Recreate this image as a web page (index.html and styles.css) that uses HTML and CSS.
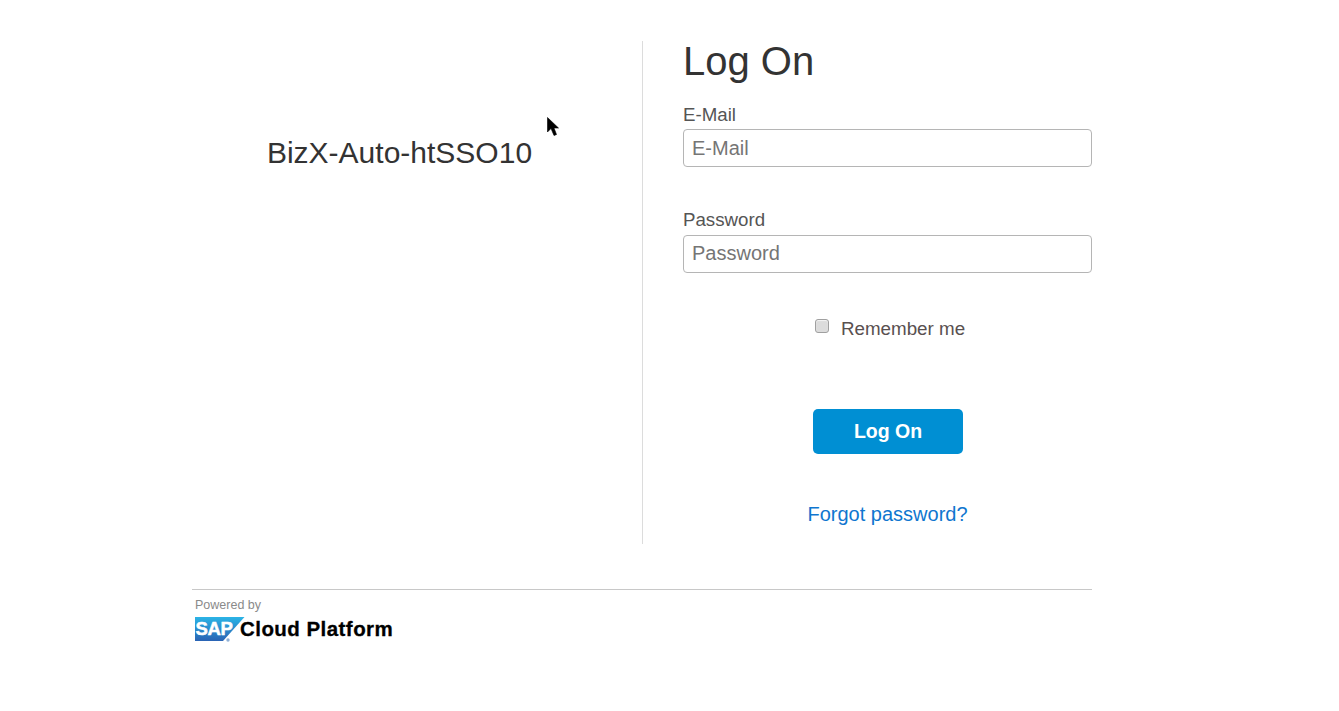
FILE: index.html
```html
<!DOCTYPE html>
<html lang="en">
<head>
<meta charset="utf-8">
<title>Log On</title>
<link rel="stylesheet" href="styles.css">
</head>
<body>
<svg class="cursor" width="12" height="20" viewBox="0 0 12 20"><path d="M0.5 0.5V15L4 11.5L7 18.5L9.5 17.5L7 11H11.5Z" fill="#000" stroke="#000" stroke-width="0.6"/></svg>
<main class="page">
  <div class="columns">
    <section class="brand"><div class="tenant">BizX-Auto-htSSO10</div></section>
    <form class="logon" onsubmit="return false">
      <h1 class="heading">Log On</h1>
      <label class="field-label" for="email">E-Mail</label>
      <input class="field" id="email" type="text" placeholder="E-Mail">
      <label class="field-label field-label-second" for="password">Password</label>
      <input class="field field-password" id="password" type="password" placeholder="Password">
      <label class="remember"><input class="check" type="checkbox"><span>Remember me</span></label>
      <button class="submit" type="submit">Log On</button>
      <a class="forgot" href="#">Forgot password?</a>
    </form>
  </div>
  <footer class="footer">
    <div class="powered">Powered by</div>
    <div class="product">
      <svg class="sap-logo" width="50" height="25" viewBox="0 0 50 25">
        <defs><linearGradient id="sapblue" x1="0" y1="0" x2="0" y2="1"><stop offset="0" stop-color="#2bb4e6"/><stop offset="1" stop-color="#2a63b4"/></linearGradient></defs>
        <path d="M0 0H49.5L28 24H0Z" fill="url(#sapblue)"/>
        <text class="sap-text" x="0.5" y="18">SAP</text>
        <circle cx="33" cy="23" r="1.7" fill="#8fb0d6"/>
      </svg>
      <span class="product-name">Cloud Platform</span>
    </div>
  </footer>
</main>
</body>
</html>
```
FILE: styles.css
```css
html, body { margin: 0; padding: 0; background: #fff; }
body { font-family: "Liberation Sans", Arial, sans-serif; height: 711px; overflow: hidden; position: relative; }
.cursor { position: absolute; left: 547px; top: 117px; }
.page { width: 900px; margin-left: 192px; padding-top: 41px; }
.columns { display: flex; height: 503px; }
.brand { width: 450px; border-right: 1px solid #dcdcdc; }
.tenant { width: 415px; margin-top: 94px; text-align: center; font-size: 30px; line-height: 36px; color: #333; white-space: nowrap; }
.logon { flex: 1; display: flex; flex-direction: column; padding-left: 40px; }
.heading { margin: 0; font-weight: 400; font-size: 40px; line-height: 40px; color: #333; height: 52px; }
.field-label { font-size: 18.7px; line-height: 22px; height: 20px; margin-top: 11px; margin-bottom: 5px; color: #555; }
.field-label-second { margin-top: 43px; line-height: 20px; }
.field { box-sizing: border-box; height: 38px; width: 409px; margin: 0; border: 1px solid #b5b5b5; border-radius: 4px; padding: 0 8px; font: 20px "Liberation Sans", Arial, sans-serif; color: #333; outline: none; }
.field-password { padding-bottom: 2px; }
.field::placeholder { color: #757575; opacity: 1; }
.remember { display: flex; align-items: center; justify-content: center; box-sizing: border-box; width: 409px; padding-left: 5px; margin-top: 44px; font-size: 18.8px; line-height: 22px; color: #595050; }
.remember span { margin-left: 12px; margin-top: 1px; }
.check { appearance: none; -webkit-appearance: none; box-sizing: border-box; width: 14px; height: 14px; margin: -6px 0 0 0; border: 1px solid #a0a0a0; border-radius: 3px; background: #dcdcdc; box-shadow: inset 0 1px 1px rgba(255,255,255,.7); }
.submit { align-self: center; margin-left: 1px; width: 150px; height: 45px; margin-top: 69px; border: 0; border-radius: 5px; background: #008fd3; color: #fff; font: bold 19.5px "Liberation Sans", Arial, sans-serif; padding: 0; }
.forgot { width: 409px; text-align: center; margin-top: 48px; font-size: 20px; line-height: 24px; color: #0f76cf; text-decoration: none; }
.footer { margin-top: 45px; border-top: 1px solid #c8c8c8; padding: 8px 0 0 3px; }
.powered { font-size: 12.5px; line-height: 14px; color: #8a8a8a; }
.product { display: flex; align-items: center; margin-top: 5px; height: 25px; }
.sap-logo { display: block; flex: none; }
.sap-text { font: bold 18.5px "Liberation Sans", Arial, sans-serif; fill: #fff; stroke: #fff; stroke-width: 0.5px; letter-spacing: -0.3px; }
.product-name { font-size: 20.5px; font-weight: bold; letter-spacing: 0.45px; -webkit-text-stroke: 0.3px #000; color: #000; margin-left: -5px; margin-top: -2px; white-space: nowrap; }
```
